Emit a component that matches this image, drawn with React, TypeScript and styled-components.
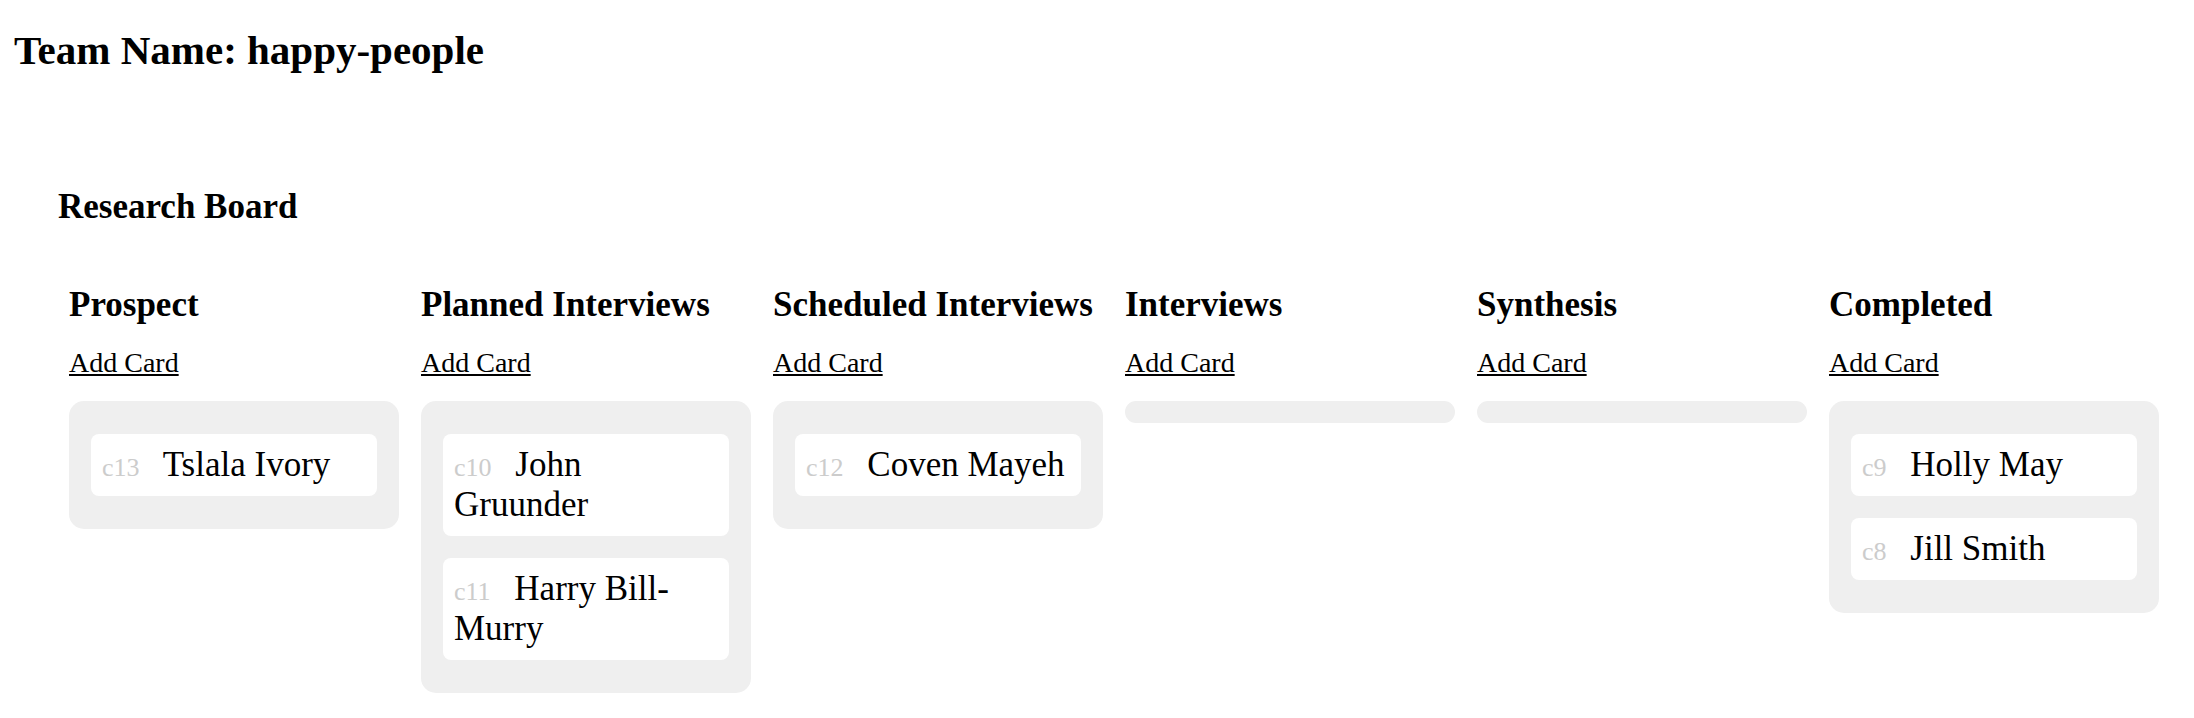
import React from "react";
import styled, { createGlobalStyle } from "styled-components";

const GlobalStyle = createGlobalStyle`
  html, body {
    margin: 0;
    padding: 0;
    background: #ffffff;
  }
  body {
    font-family: "Liberation Serif", "Times New Roman", serif;
    color: #000000;
  }
`;

const Page = styled.div`
  padding: 26px 0 0 14px;
`;

const TeamTitle = styled.h1`
  margin: 0;
  font-size: 41px;
  font-weight: 700;
  line-height: normal;
`;

const Board = styled.section`
  margin-top: 113px;
  padding-left: 44px;
`;

const BoardTitle = styled.h2`
  margin: 0;
  font-size: 35px;
  font-weight: 700;
  line-height: normal;
`;

const Columns = styled.div`
  display: grid;
  grid-template-columns: repeat(6, 330px);
  column-gap: 22px;
  align-items: start;
  margin-top: 58px;
  padding-left: 11px;
`;

const Column = styled.div`
  display: flex;
  flex-direction: column;
  align-items: stretch;
`;

const ColumnTitle = styled.h3`
  margin: 0 0 22px 0;
  font-size: 35px;
  font-weight: 700;
  line-height: normal;
  white-space: nowrap;
`;

const AddCard = styled.a`
  align-self: flex-start;
  font-size: 28px;
  line-height: normal;
  color: #000000;
  text-decoration: underline;
  cursor: pointer;
  margin-bottom: 22px;
`;

const CardList = styled.div`
  display: block;
  background: #efefef;
  border-radius: 15px;
  padding: 11px;
`;

const Card = styled.div`
  display: block;
  margin: 22px 11px;
  padding: 11px;
  background: #ffffff;
  border-radius: 8px;
  font-size: 35px;
  line-height: normal;
`;

const CardId = styled.span`
  font-size: 26px;
  color: #cccccc;
  margin-right: 15px;
`;

type CardData = { id: string; name: string };
type ColumnData = { title: string; cards: CardData[] };

const columns: ColumnData[] = [
  { title: "Prospect", cards: [{ id: "c13", name: "Tslala Ivory" }] },
  {
    title: "Planned Interviews",
    cards: [
      { id: "c10", name: "John Gruunder" },
      { id: "c11", name: "Harry Bill-Murry" },
    ],
  },
  { title: "Scheduled Interviews", cards: [{ id: "c12", name: "Coven Mayeh" }] },
  { title: "Interviews", cards: [] },
  { title: "Synthesis", cards: [] },
  {
    title: "Completed",
    cards: [
      { id: "c9", name: "Holly May" },
      { id: "c8", name: "Jill Smith" },
    ],
  },
];

export default function App() {
  return (
    <>
      <GlobalStyle />
      <Page>
        <TeamTitle>Team Name: happy-people</TeamTitle>
        <Board>
          <BoardTitle>Research Board</BoardTitle>
          <Columns>
            {columns.map((col) => (
              <Column key={col.title}>
                <ColumnTitle>{col.title}</ColumnTitle>
                <AddCard href="#">Add Card</AddCard>
                <CardList>
                  {col.cards.map((card) => (
                    <Card key={card.id}>
                      <CardId>{card.id}</CardId> {card.name}
                    </Card>
                  ))}
                </CardList>
              </Column>
            ))}
          </Columns>
        </Board>
      </Page>
    </>
  );
}
